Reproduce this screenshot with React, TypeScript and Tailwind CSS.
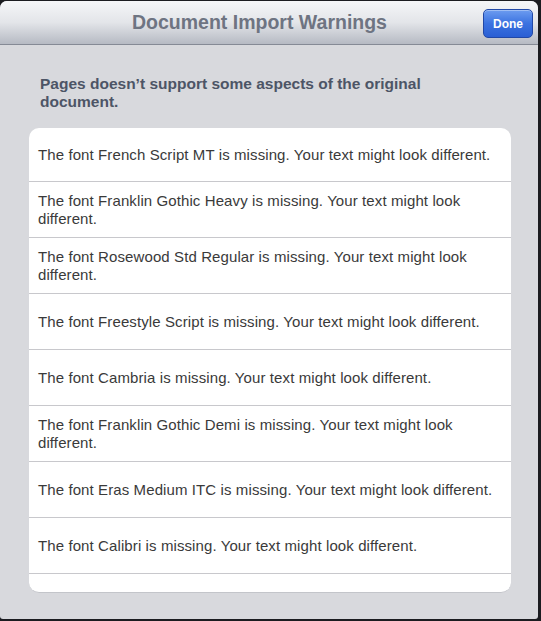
const warnings = [
  "The font French Script MT is missing. Your text might look different.",
  "The font Franklin Gothic Heavy is missing. Your text might look different.",
  "The font Rosewood Std Regular is missing. Your text might look different.",
  "The font Freestyle Script is missing. Your text might look different.",
  "The font Cambria is missing. Your text might look different.",
  "The font Franklin Gothic Demi is missing. Your text might look different.",
  "The font Eras Medium ITC is missing. Your text might look different.",
  "The font Calibri is missing. Your text might look different.",
];

export default function App() {
  return (
    <div className="w-[541px] h-[621px] bg-[#1b1c20] pt-px overflow-hidden font-['Liberation_Sans',Arial,sans-serif]">
      <div className="w-[538px] h-[618px] bg-[#d8d9dd] rounded-t-[7px] rounded-b-[3px] overflow-hidden flex flex-col">
        {/* Header */}
        <div className="relative h-[44px] shrink-0 flex items-center justify-center pr-[19px] bg-gradient-to-b from-[#f5f6f8] via-[#e3e5e9] to-[#b6bac3] border-b border-[#858a95]">
          <h1 className="text-[19.5px] font-bold text-[#6e7482]">
            Document Import Warnings
          </h1>
          <button className="absolute right-[5px] top-[8px] w-[50px] h-[29px] rounded-[5px] border border-[#2148a6] bg-gradient-to-b from-[#6d9cf0] via-[#3b72e0] to-[#2a5fd4] text-white text-[12px] font-bold shadow-[inset_0_1px_0_rgba(255,255,255,0.35)]">
            Done
          </button>
        </div>

        {/* Body */}
        <div className="flex-1 pl-[29px] pr-[27px] pt-[30px]">
          <p className="ml-[11px] max-w-[400px] text-[15.5px] leading-[18px] font-bold text-[#4d5566]">
            Pages doesn’t support some aspects of the original document.
          </p>
          <div className="mt-[17px] h-[465px] bg-white rounded-[10px] overflow-hidden border-b border-[#c3c5ca]">
            {warnings.map((w, i) => (
              <div
                key={i}
                className={`flex items-center pl-[9px] pr-[12px] border-b border-[#c8c8cc] text-[15px] tracking-[0.1px] leading-[18px] text-[#3a3a3a] ${
                  i === 0 ? "h-[54px]" : "h-[56px]"
                }`}
              >
                {w}
              </div>
            ))}
          </div>
        </div>
      </div>
    </div>
  );
}
